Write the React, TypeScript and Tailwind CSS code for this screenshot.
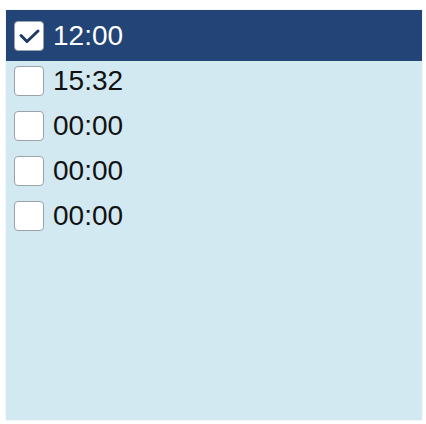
import React, { useState } from 'react';

interface TimeSlot {
  id: number;
  time: string;
}

const slots: TimeSlot[] = [
  { id: 1, time: '12:00' },
  { id: 2, time: '15:32' },
  { id: 3, time: '00:00' },
  { id: 4, time: '00:00' },
  { id: 5, time: '00:00' },
];

const CheckBox: React.FC<{ checked: boolean }> = ({ checked }) => (
  <div className="flex h-[30px] w-[30px] shrink-0 items-center justify-center rounded-[4px] border border-[#9aa3a8] bg-white">
    {checked && (
      <svg width="24" height="24" viewBox="0 0 24 24" fill="none">
        <path d="M4 11.5 L10 17.5 L21 7" stroke="#1f3a66" strokeWidth="3" strokeLinecap="round" strokeLinejoin="round" />
      </svg>
    )}
  </div>
);

const App: React.FC = () => {
  const [selected, setSelected] = useState<number[]>([1]);

  const toggle = (id: number) =>
    setSelected((prev) => (prev.includes(id) ? prev.filter((s) => s !== id) : [...prev, id]));

  return (
    <div className="h-[424px] w-[426px] bg-white pl-[6px] pt-[10px]" style={{ fontFamily: '"Liberation Sans", Arial, sans-serif' }}>
      <div className="flex h-[410px] w-[416px] flex-col bg-[#d2e9f1] shadow-[0_0_1px_#b9cfd8]">
        {slots.map((slot, i) => {
          const isOn = selected.includes(slot.id);
          return (
            <div
              key={slot.id}
              onClick={() => toggle(slot.id)}
              className={`flex cursor-pointer items-center gap-[9px] px-[8px] ${
                i === 0 ? 'h-[51px]' : 'h-[45px]'
              } ${i === 1 ? '-mt-[3px]' : ''} ${isOn ? 'bg-[#234476] text-white' : 'text-[#111]'}`}
            >
              <CheckBox checked={isOn} />
              <span className="text-[28px] leading-none">{slot.time}</span>
            </div>
          );
        })}
      </div>
    </div>
  );
};

export default App;
